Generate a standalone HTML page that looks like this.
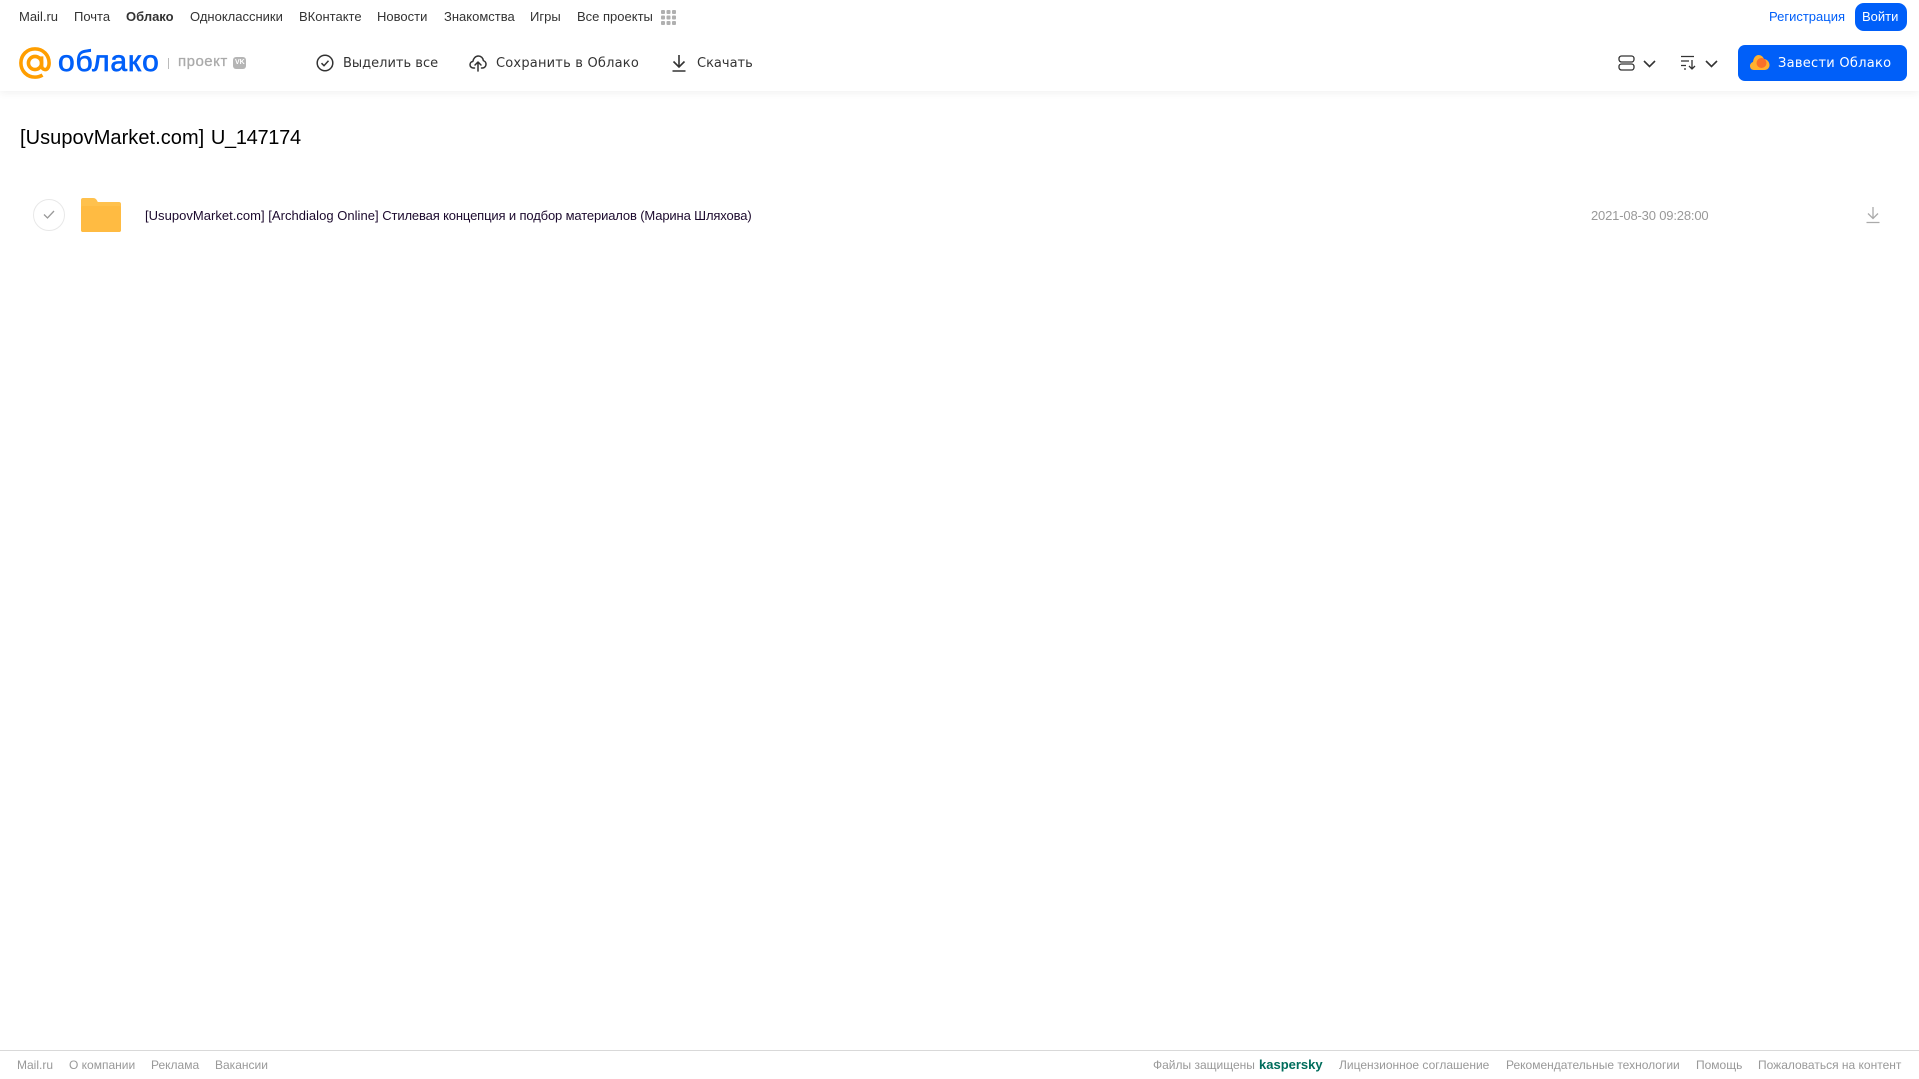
<!DOCTYPE html>
<html lang="ru">
<head>
<meta charset="utf-8">
<title>Облако</title>
<style>
html,body{margin:0;padding:0;background:#fff}
body{position:relative;width:1919px;height:1079px;overflow:hidden;font-family:"Liberation Sans",sans-serif}
.t{position:absolute;white-space:nowrap;line-height:20px}
.n{top:7px;font-size:13px;color:#333}
.b{top:54px;font-size:13px;color:#333;font-family:"DejaVu Sans",sans-serif}
.f{top:1055px;font-size:12px;color:#999}
svg{position:absolute;display:block}
</style>
</head>
<body>
<div style="position:absolute;left:0;top:0;width:1919px;height:91px;background:#fff;box-shadow:0 2px 8px rgba(0,0,0,.06)"></div>

<span class="t n" style="left:19px">Mail.ru</span>
<span class="t n" style="left:74px">Почта</span>
<span class="t n" style="left:126px;font-weight:bold">Облако</span>
<span class="t n" style="left:190px">Одноклассники</span>
<span class="t n" style="left:299px">ВКонтакте</span>
<span class="t n" style="left:377px">Новости</span>
<span class="t n" style="left:444px">Знакомства</span>
<span class="t n" style="left:530px">Игры</span>
<span class="t n" style="left:577px">Все проекты</span>
<svg style="left:661px;top:10px" width="15" height="15" viewBox="0 0 15 15" fill="#b0b0b0">
<rect x="0" y="0" width="4" height="4" rx="1"/><rect x="5.500" y="0" width="4" height="4" rx="1"/><rect x="11" y="0" width="4" height="4" rx="1"/>
<rect x="0" y="5.500" width="4" height="4" rx="1"/><rect x="5.500" y="5.500" width="4" height="4" rx="1"/><rect x="11" y="5.500" width="4" height="4" rx="1"/>
<rect x="0" y="11" width="4" height="4" rx="1"/><rect x="5.500" y="11" width="4" height="4" rx="1"/><rect x="11" y="11" width="4" height="4" rx="1"/>
</svg>

<span class="t n" style="left:1769px;color:#005ff9">Регистрация</span>
<div style="position:absolute;left:1855px;top:3px;width:52px;height:28px;border-radius:9px;background:#005ff9"></div>
<span class="t n" style="left:1862px;color:#fff">Войти</span>

<svg style="left:19px;top:47px" width="32" height="32" viewBox="0 0 34 34" fill="none" stroke="#ff9e00" stroke-width="3.800">
<circle cx="17" cy="17" r="7"/>
<path d="M24 10v9.500c0 3 2 4.500 4 4.500s4-2.500 4-7C32 8.500 25.500 2 17 2S2 8.500 2 17s6.500 15 15 15c3 0 5.500-.7 8-2.200"/>
</svg>
<span class="t" style="left:58px;top:46px;line-height:32px;font-size:30px;color:#005ff9;-webkit-text-stroke:.7px #005ff9;letter-spacing:.8px">облако</span>
<div style="position:absolute;left:168px;top:58px;width:1px;height:11px;background:#bbb"></div>
<span class="t" style="left:178px;top:52px;font-size:15px;color:#aaa;-webkit-text-stroke:.3px #aaa;letter-spacing:.5px">проект</span>
<div style="position:absolute;left:233px;top:57px;width:13px;height:12px;border-radius:3px;background:#b5b5b5"></div>
<span class="t" style="left:235px;top:53px;font-size:7px;font-weight:bold;color:#fff">VK</span>

<svg style="left:316px;top:54px" width="18" height="18" viewBox="0 0 18 18" fill="none" stroke="#333" stroke-width="1.500">
<circle cx="9" cy="9" r="7.800"/><path d="M5.500 9.200l2.500 2.500 4.500-5"/>
</svg>
<span class="t b" style="left:343px">Выделить все</span>

<svg style="left:469px;top:54px" width="18" height="18" viewBox="0 0 18 18" fill="none" stroke="#333" stroke-width="1.500" stroke-linecap="round" stroke-linejoin="round">
<path d="M5.500 14H4.500C2.500 14 1 12.500 1 10.700c0-1.700 1.200-3 2.800-3.200C4.300 4.500 6.500 2 9.300 2c2.700 0 4.800 2 5.100 4.700 1.500.4 2.600 1.900 2.600 3.500 0 2-1.500 3.800-3.500 3.800h-1"/>
<path d="M9 17V8M6 11l3-3 3 3"/>
</svg>
<span class="t b" style="left:496px;letter-spacing:.2px">Сохранить в Облако</span>

<svg style="left:671px;top:54px" width="16" height="18" viewBox="0 0 16 18" fill="none" stroke="#333" stroke-width="1.600">
<path d="M8 1v11.500M2.500 7.500L8 13l5.500-5.500M1.500 17h13"/>
</svg>
<span class="t b" style="left:697px">Скачать</span>

<svg style="left:1618px;top:55px" width="17" height="16" viewBox="0 0 17 16" fill="none" stroke="#333" stroke-width="1.300">
<rect x="1" y="1" width="15" height="6" rx="2.500"/><rect x="1" y="9" width="15" height="6" rx="2.500"/>
</svg>
<svg style="left:1643px;top:60px" width="13" height="8" viewBox="0 0 13 8" fill="none" stroke="#333" stroke-width="1.600"><path d="M1 1l5.500 5.500L12 1"/></svg>
<svg style="left:1680px;top:55px" width="17" height="15" viewBox="0 0 17 15" fill="none" stroke="#333" stroke-width="1.300">
<path d="M1 1.500h13M1 6h8M1 10.500h5M4 14h2M12 5v9M9 11l3 3 3-3"/>
</svg>
<svg style="left:1705px;top:60px" width="13" height="8" viewBox="0 0 13 8" fill="none" stroke="#333" stroke-width="1.600"><path d="M1 1l5.500 5.500L12 1"/></svg>

<div style="position:absolute;left:1738px;top:45px;width:169px;height:36px;border-radius:7px;background:#005ff9"></div>
<svg style="left:1750px;top:54px" width="20" height="17" viewBox="0 0 20 17">
<path d="M4 16C1.500 16 0 14.200 0 12c0-2 1.300-3.500 3-4C3.500 3.500 6 1 8.500 1 11 1 13 2.500 14 5c3.200.2 5.500 3 5.500 6 0 3-2.200 5-5 5z" fill="#ffb02e"/>
<circle cx="11.500" cy="9" r="5" fill="#f8702a"/>
</svg>
<span class="t b" style="left:1778px;color:#fff;letter-spacing:.27px">Завести Облако</span>

<span class="t" style="left:20px;top:126px;line-height:24px;font-size:20px;color:#000"><span style="letter-spacing:.05px">[UsupovMarket.com]</span> <span style="letter-spacing:-.3px;margin-left:1px">U_147174</span></span>

<div style="position:absolute;left:33px;top:199px;width:30px;height:30px;border:1px solid #e8e8e8;border-radius:50%"></div>
<svg style="left:43px;top:210px" width="12" height="9" viewBox="0 0 12 9" fill="none" stroke="#999" stroke-width="1.300"><path d="M1 4.500l3.500 3.500L11 1"/></svg>

<svg style="left:81px;top:198px" width="40" height="34" viewBox="0 0 40 34">
<path d="M2 0h10c2 0 3 .8 4 2.500l.8 1.500H38c1.200 0 2 .8 2 2v26c0 1.200-.8 2-2 2H2c-1.200 0-2-.8-2-2V2C0 .8.800 0 2 0z" fill="#ffc14d"/>
<rect x="0" y="8" width="40" height="26" rx="2" fill="#ffbb42"/>
</svg>

<span class="t" style="left:145px;top:206px;font-size:13px;color:#1c0a2e"><span style="letter-spacing:.025px">[UsupovMarket.com] [Archdialog Online] </span><span style="letter-spacing:-.137px">Стилевая концепция и подбор материалов (Марина Шляхова)</span></span>
<span class="t" style="left:1591px;top:206px;font-size:13px;color:#999;letter-spacing:-.17px">2021-08-30 09:28:00</span>

<svg style="left:1866px;top:206px" width="14" height="18" viewBox="0 0 14 18" fill="none" stroke="#aaa" stroke-width="1.300">
<path d="M7 1v11M2 7.500L7 12.500l5-5M.5 16.500h13"/>
</svg>

<div style="position:absolute;left:0;top:1050px;width:1919px;height:1px;background:#d9d9d9"></div>
<span class="t f" style="left:17px">Mail.ru</span>
<span class="t f" style="left:69px">О компании</span>
<span class="t f" style="left:151px">Реклама</span>
<span class="t f" style="left:215px">Вакансии</span>
<span class="t f" style="left:1153px">Файлы защищены</span>
<span class="t f" style="left:1259px;font-weight:bold;color:#006d5c;font-size:13px">kaspersky</span>
<span class="t f" style="left:1339px">Лицензионное соглашение</span>
<span class="t f" style="left:1506px">Рекомендательные технологии</span>
<span class="t f" style="left:1696px">Помощь</span>
<span class="t f" style="left:1758px">Пожаловаться на контент</span>
</body>
</html>
